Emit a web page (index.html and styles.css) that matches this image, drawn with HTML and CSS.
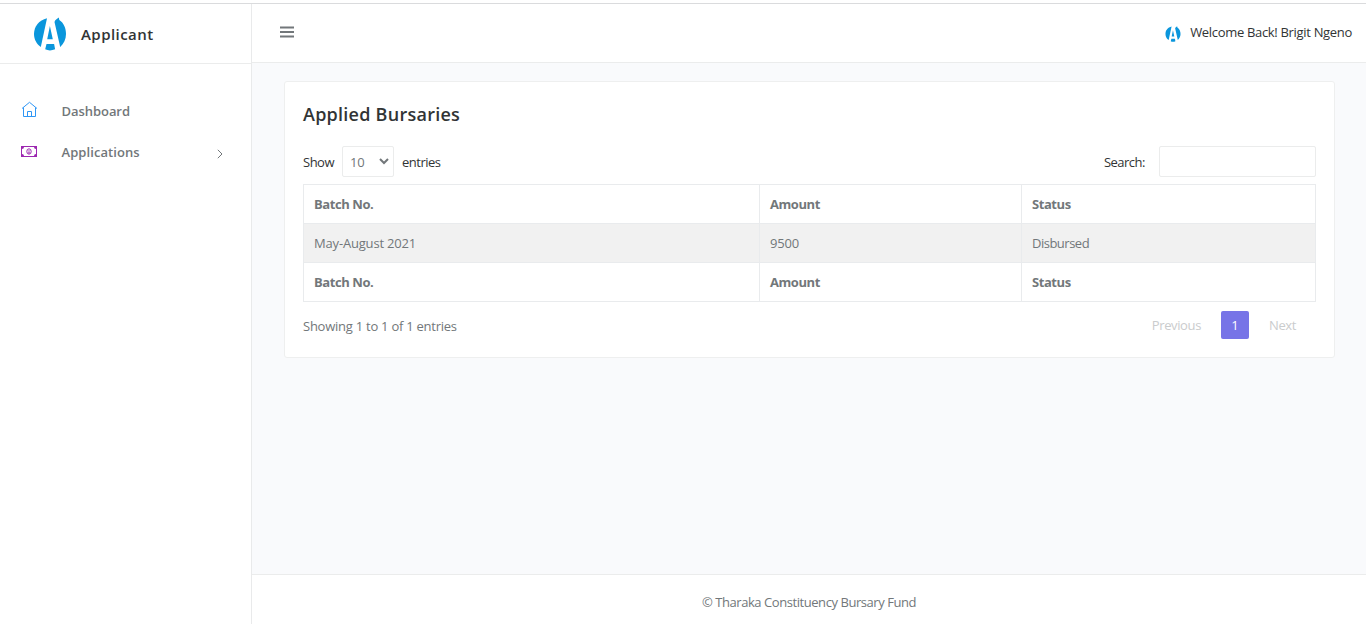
FILE: index.html
```html
<!DOCTYPE html>
<html lang="en">
<head>
<meta charset="utf-8">
<title>Applied Bursaries</title>
<link rel="stylesheet" href="styles.css">
</head>
<body>
<svg class="defs" width="0" height="0" aria-hidden="true">
  <symbol id="logo" viewBox="0 0 32 34">
    <path fill="#0a96dc" d="M13 1.200C5 3 0 9.300 0 17c0 5.300 2.500 10 6.800 13z"/>
    <path fill="#0a96dc" d="M20.500 5C21 3 23 2.200 24.800 .6L25.300 3C29.800 6 32 11 32 17c0 5-2.200 9.700-5.800 13z"/>
    <path fill="#0a96dc" d="M15.900 9l2.900 13.200h-5.600zM12.500 27h7.600l1 5.300c-3.500 1.500-6.900 1.500-9.900 0z"/>
  </symbol>
</svg>
<div class="app">
  <aside class="sidebar">
    <div class="brand">
      <svg class="brand-logo"><use href="#logo"/></svg>
      <span class="brand-name">Applicant</span>
    </div>
    <nav class="menu">
      <a class="menu-item">
        <svg class="menu-icon home" viewBox="0 0 17 17" fill="none" stroke="#2f96f5"><path d="M1 7.500L8.500 1.300 16 7.500M2.500 6.500v9h12v-9M6.500 15.500v-5h4v5"/></svg>
        <span class="menu-text dash">Dashboard</span>
      </a>
      <a class="menu-item">
        <svg class="menu-icon money" viewBox="0 0 17 17"><path fill="#9c27b0" fill-rule="evenodd" d="M0 3h16v11H0zM3 4a2 2 0 0 1-2 2v5a2 2 0 0 1 2 2h10a2 2 0 0 1 2-2V6a2 2 0 0 1-2-2z"/><ellipse cx="8" cy="8.500" rx="2.200" ry="2.700" fill="none" stroke="#9c27b0"/><path d="M8 7v3M7 10h2" stroke="#9c27b0" stroke-width=".8" fill="none"/></svg>
        <span class="menu-text">Applications</span>
        <svg class="chevron" viewBox="0 0 6 10" fill="none" stroke="#72777a"><path d="M.8.800L5 5 .8 9.200"/></svg>
      </a>
    </nav>
  </aside>
  <div class="page">
    <header class="topbar">
      <svg class="burger" viewBox="0 0 14 12"><path d="M0 1.500h14M0 6h14M0 10.500h14" stroke="#72777a" stroke-width="1.800"/></svg>
      <div class="user">
        <svg class="user-logo"><use href="#logo"/></svg>
        <span class="welcome">Welcome Back! Brigit Ngeno</span>
      </div>
    </header>
    <main class="content">
      <section class="card">
        <h4 class="title">Applied Bursaries</h4>
        <div class="controls">
          <label class="length"><span class="show">Show</span>
            <span class="select"><span class="ten">10</span><svg class="caret" viewBox="0 0 10 7" fill="none" stroke="#72777a" stroke-width="2"><path d="M1 1l4 4 4-4"/></svg></span>
            <span class="entries">entries</span></label>
          <label class="search"><span class="search-text">Search:</span><input class="search-input" type="text"></label>
        </div>
        <table class="table">
          <colgroup><col class="c1"><col class="c2"><col class="c3"></colgroup>
          <thead><tr><th>Batch No.</th><th>Amount</th><th>Status</th></tr></thead>
          <tbody><tr><td class="batch">May-August 2021</td><td>9500</td><td class="status">Disbursed</td></tr></tbody>
          <tfoot><tr><th>Batch No.</th><th>Amount</th><th>Status</th></tr></tfoot>
        </table>
        <div class="table-foot">
          <span class="info">Showing 1 to 1 of 1 entries</span>
          <div class="pager"><a class="prev">Previous</a><a class="current">1</a><a class="next">Next</a></div>
        </div>
      </section>
    </main>
    <footer class="footer"><span class="copy">© Tharaka Constituency Bursary Fund</span></footer>
  </div>
</div>
</body>
</html>
```
FILE: styles.css
```css
* { box-sizing: border-box; }
body {
  margin: 0;
  font: 13px/20px "Open Sans", "Noto Sans", sans-serif;
  color: #72777a;
  background: #fff;
  overflow: hidden;
}
.defs { display: none; }
.app {
  display: flex; height: 624px; padding-top: 3px;
  background: linear-gradient(#dadbdd, #dadbdd) 0 3px / 100% 1px no-repeat;
}
.sidebar { width: 252px; border-right: 1px solid #e9eaeb; margin-top: 1px; }
.brand {
  display: flex; align-items: center;
  height: 60px; padding-left: 34px;
  border-bottom: 1px solid #ebecec;
}
.brand-logo { width: 32px; height: 34px; }
.brand-name { margin-left: 15px; font-size: 15px; font-weight: 600; color: #313435; letter-spacing: .45px; }
.menu { padding-top: 27px; }
.menu-item { display: flex; align-items: center; height: 41px; padding-left: 21px; }
.menu-icon { width: 17px; height: 17px; margin-right: 24px; }
.home { margin-top: -4px; }
.money { margin-top: -2px; }
.menu-text { font-weight: 600; margin: -2px 0 0 -.5px; letter-spacing: .07px; }
.dash { letter-spacing: -.05px; }
.chevron { width: 6px; height: 10px; margin: 3px 28px 0 auto; }
.page { flex: 1; display: flex; flex-direction: column; margin-top: 1px; }
.topbar {
  display: flex; align-items: center; justify-content: space-between;
  height: 59px; padding: 0 14px 0 28px;
  border-bottom: 1px solid #ebecec;
}
.burger { width: 14px; height: 12px; margin-top: -2px; }
.user { display: flex; align-items: center; color: #313435; }
.user-logo { width: 16px; height: 16px; margin-right: 9px; margin-top: 2px; }
.welcome { letter-spacing: -.32px; margin-top: -2px; }
.content { flex: 1; background: #f9fafc; padding: 18px 31px 0 32px; }
.card {
  height: 277px; padding: 20px 18px 0;
  background: #fff; border: 1px solid #eeefef; border-radius: 3px;
}
.title { margin: 0; font-size: 18px; line-height: 24px; font-weight: 600; color: #313435; letter-spacing: .25px; }
.controls { display: flex; justify-content: space-between; margin-top: 20px; height: 31px; color: #313435; }
.length, .search { display: flex; align-items: center; }
.show, .entries, .search-text { letter-spacing: -.5px; }
.select {
  display: flex; align-items: center; justify-content: space-between;
  width: 52px; height: 31px; margin: 0 8px; padding: 0 4px 0 7px;
  border: 1px solid #ebecec; border-radius: 2px; color: #72777a;
}
.ten { letter-spacing: -.3px; }
.caret { width: 10px; height: 7px; }
.search-input { width: 157px; height: 31px; margin-left: 14px; border: 1px solid #ebecec; border-radius: 2px; }
.table { width: 1013px; margin-top: 7px; border-collapse: collapse; table-layout: fixed; }
.c1 { width: 456px; }
.c2 { width: 262px; }
.table th, .table td { height: 39px; padding: 0 10px; text-align: left; border: 1px solid #e9ebed; line-height: 20px; }
.table th { font-weight: 700; letter-spacing: -.43px; }
.table td { background: #f1f1f1; letter-spacing: -.18px; }
.table .status { letter-spacing: -.5px; }
.table-foot { display: flex; justify-content: space-between; margin-top: 9px; }
.info { padding-top: 5px; letter-spacing: -.25px; }
.pager { display: flex; line-height: 28px; color: #cacccd; padding-right: 20px; }
.prev, .next { letter-spacing: -.38px; }
.current { width: 28px; height: 28px; margin: 0 20px; text-align: center; background: #7774e7; color: #fff; border-radius: 2px; }
.footer { height: 50px; border-top: 1px solid #ebecec; display: flex; align-items: center; justify-content: center; padding-top: 4px; }
.copy { letter-spacing: -.44px; }
```
